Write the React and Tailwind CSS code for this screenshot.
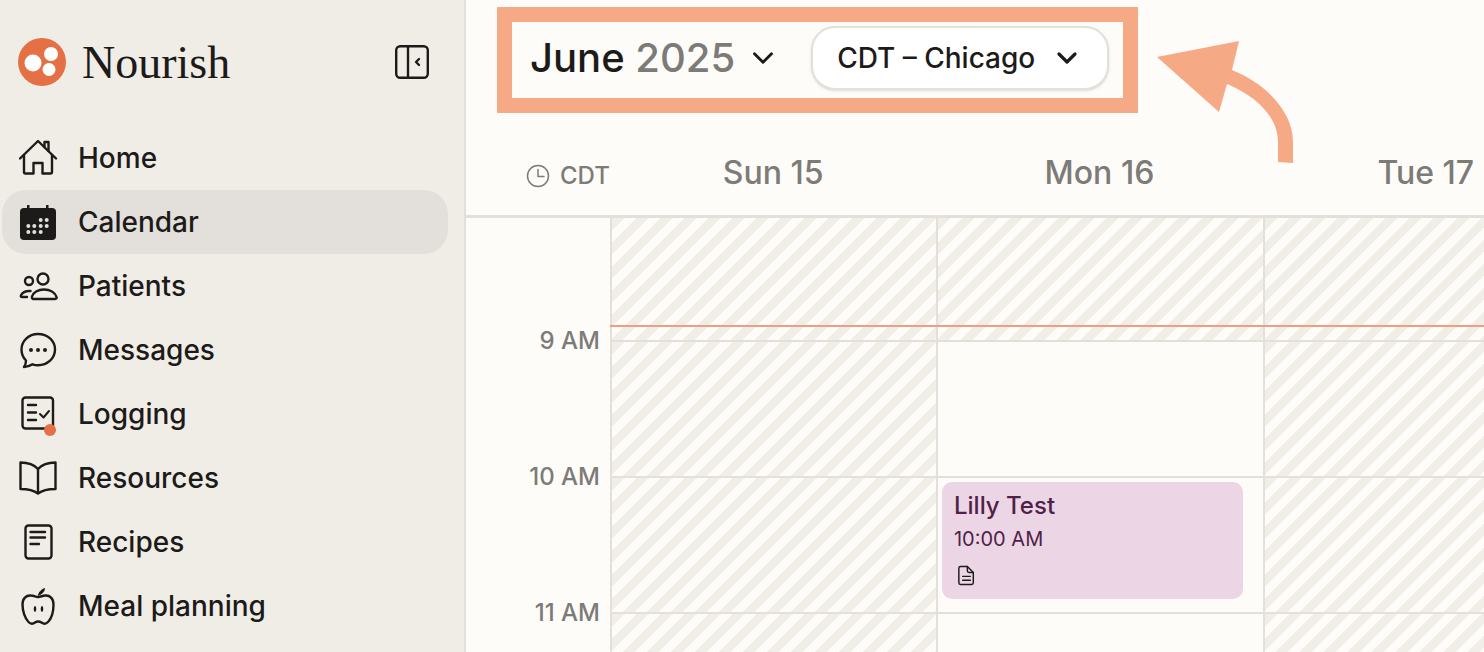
import { ChevronDown } from 'lucide-react';

const stripes = 'bg-[repeating-linear-gradient(135deg,#f1eee8_0,#f1eee8_8.5px,#fefcf9_8.5px,#fefcf9_17px)]';

function Icon({ children, className = '' }) {
  return (
    <svg
      viewBox="0 0 40 40"
      fill="none"
      stroke="#1c1b19"
      strokeWidth="2.4"
      strokeLinecap="round"
      strokeLinejoin="round"
      className={`w-10 h-10 shrink-0 ${className}`}
    >
      {children}
    </svg>
  );
}

const HomeIcon = () => (
  <Icon>
    <path d="M1 20.500 19 3l18 17.500" />
    <path d="M5 17v17a1.500 1.500 0 0 0 1.500 1.500h8V25h9v10.500h8A1.500 1.500 0 0 0 33 34V17" />
    <path d="M25.500 9V4h4v9" />
  </Icon>
);

const CalendarIcon = () => (
  <svg viewBox="0 0 40 40" className="w-10 h-10 shrink-0">
    <rect x="1" y="6" width="36" height="32" rx="4" fill="#1c1b19" />
    <rect x="8" y="3" width="2.500" height="4" fill="#1c1b19" />
    <rect x="27" y="3" width="2.500" height="4" fill="#1c1b19" />
    {[[21.700, 18], [27.700, 18], [9.300, 24], [15.300, 24], [21.700, 24], [27.700, 24], [9.300, 30], [15.300, 30], [21.700, 30]].map(([cx, cy]) => (
      <circle key={`${cx}-${cy}`} cx={cx} cy={cy} r="2" fill="#e3dfdb" />
    ))}
  </svg>
);

const PatientsIcon = () => (
  <Icon>
    <circle cx="10" cy="15" r="4" />
    <circle cx="24" cy="13" r="5.500" />
    <path d="M14.500 33h21.500c1.500 0 2-1 1.500-2C36 26.500 31 23.500 25 23.500S14 26.500 13 30.500C12.600 32 13.300 33 14.500 33Z" />
    <path d="M8 31H3c-1 0-1.500-.7-1-1.700C3.500 26.500 6.500 25 10 25h1.500" />
  </Icon>
);

const MessagesIcon = () => (
  <Icon>
    <path d="M5 37c3 0 6-1 8.500-2.700 1.800.7 3.600 1 5.500 1 9.500 0 17-7 17-15.800S28.500 4 19 4 2.500 11 2.500 19.500c0 4.300 1.500 8 4.500 11 0 2.500-.5 4.500-2 6.500Z" />
    <circle cx="12" cy="20" r="2" fill="#1c1b19" stroke="none" />
    <circle cx="19" cy="20" r="2" fill="#1c1b19" stroke="none" />
    <circle cx="26" cy="20" r="2" fill="#1c1b19" stroke="none" />
  </Icon>
);

const LoggingIcon = () => (
  <div className="relative w-10 h-10 shrink-0">
    <Icon>
      <rect x="3.500" y="3.500" width="30.500" height="31" rx="3" />
      <path d="M9 11h8M9 18.500h8M9 26h8" />
      <path d="m21 20 3.500 3.500L30 17" strokeWidth="2" />
    </Icon>
    <span className="absolute left-[25px] top-[30px] w-3 h-3 rounded-full bg-[#e57045]" />
  </div>
);

const ResourcesIcon = () => (
  <Icon>
    <path d="M19 11C15 6.500 8 4.500 1.500 4.500V31c7 0 13 1 17.500 4.500 4.500-3.500 10.500-4.500 17.500-4.500V4.500C30 4.500 23 6.500 19 11Z" />
    <path d="M19 11v24" />
  </Icon>
);

const RecipesIcon = () => (
  <Icon>
    <rect x="6.500" y="3.500" width="26" height="33" rx="3" />
    <path d="M11.500 10h14.500M11.500 15.500h14.500M11.500 22H20" />
  </Icon>
);

const MealIcon = () => (
  <Icon>
    <path d="M12 9.500C7 9 3.500 12.500 3.500 18.500c0 6.500 2.500 14 6 17.500 2 2 4.500 2 6.500.5 2.300-1.500 4-1.500 6.500 0 2 1.500 4.500 1.500 6.500-.5 3.500-3.500 5.500-11 5.500-17.500 0-6-3.500-9.500-8.500-9-2.500.2-4.500 1.500-7 1.500s-3.500-1.300-7-1.500Z" />
    <path d="M19.500 9c.5-3 2.500-5 6-6.500-.2 3-2 5.300-6 6.500Z" fill="#1c1b19" strokeWidth="1" />
    <ellipse cx="16" cy="23" rx="1.300" ry="3" fill="#1c1b19" stroke="none" />
    <ellipse cx="23" cy="23" rx="1.300" ry="3" fill="#1c1b19" stroke="none" />
  </Icon>
);

const navItems = [
  { label: 'Home', icon: HomeIcon },
  { label: 'Calendar', icon: CalendarIcon, active: true },
  { label: 'Patients', icon: PatientsIcon },
  { label: 'Messages', icon: MessagesIcon },
  { label: 'Logging', icon: LoggingIcon },
  { label: 'Resources', icon: ResourcesIcon },
  { label: 'Recipes', icon: RecipesIcon },
  { label: 'Meal planning', icon: MealIcon },
];

function Sidebar() {
  return (
    <aside className="w-[466px] shrink-0 h-full bg-[#f0ede7] border-r-2 border-[#e3dfdb] overflow-hidden">
      <div className="h-[126px] pl-[18px] pr-[35px] pt-[38px] flex items-start justify-between">
        <div className="flex items-center h-12">
          <svg viewBox="0 0 48 48" className="w-12 h-12 shrink-0">
            <circle cx="24" cy="24" r="24" fill="#e57045" />
            <circle cx="15" cy="25" r="8.500" fill="#fff" />
            <circle cx="33" cy="16" r="7" fill="#fff" />
            <circle cx="31" cy="31.500" r="6.500" fill="#fff" />
          </svg>
          <span className="ml-4 mt-[2px] text-[46px] leading-none text-[#1c1b19] font-['Liberation_Serif',serif]">Nourish</span>
        </div>
        <svg viewBox="0 0 34 34" fill="none" stroke="#1c1b19" strokeWidth="2.400" className="w-[34px] h-[34px] mt-[7px]">
          <rect x="1.200" y="1.200" width="31.600" height="31.600" rx="4" />
          <path d="M13 1v32" />
          <path d="m24 14-3 3 3 3" strokeLinecap="round" strokeLinejoin="round" />
        </svg>
      </div>
      <nav className="flex flex-col pl-[2px] pr-[16px]">
        {navItems.map(({ label, icon: NavIcon, active }) => (
          <div
            key={label}
            className={`h-16 shrink-0 flex items-center pl-[17px] rounded-[24px] ${active ? 'bg-[#e3dfdb]' : ''}`}
          >
            <NavIcon />
            <span className="ml-[19px] text-[28px] leading-none font-medium text-[#1c1b19]">{label}</span>
          </div>
        ))}
      </nav>
    </aside>
  );
}

function Header() {
  return (
    <header className="h-[218px] shrink-0 border-b-[3px] border-[#e3dfdb]">
      <div className="pl-[31px] pt-[7px]">
        <div className="w-[641px] h-[106px] border-[15px] border-[#f5a985] flex items-center pl-[18px] pb-[4px]">
          <h1 className="text-[40px] leading-none font-medium text-[#1c1b19] whitespace-nowrap">
            June <span className="text-[#7c7b77]">2025</span>
          </h1>
          <ChevronDown className="ml-[11px] w-[34px] h-[34px] text-[#1c1b19]" strokeWidth={2} />
          <div className="ml-[31px] w-[298px] h-[64px] rounded-[24px] bg-white border-2 border-[#e3dfdb] shadow-sm flex items-center justify-between pl-6 pr-[24px]">
            <span className="text-[28px] leading-none font-medium text-[#1c1b19] whitespace-nowrap">CDT – Chicago</span>
            <ChevronDown className="w-8 h-8 text-[#1c1b19]" strokeWidth={2.4} />
          </div>
        </div>
      </div>
      <div className="flex items-center h-[102px] pt-[17px]">
        <div className="w-[144px] shrink-0 flex items-center pl-[60px] pt-[7px] text-[#7c7b77]">
          <svg viewBox="0 0 24 24" fill="none" stroke="#7c7b77" strokeWidth="1.500" strokeLinecap="round" strokeLinejoin="round" className="w-6 h-6 shrink-0">
            <circle cx="12" cy="12" r="10.500" />
            <path d="M12 5.500V12.500H18" />
          </svg>
          <span className="ml-[10px] text-[24px] leading-none font-medium">CDT</span>
        </div>
        {['Sun 15', 'Mon 16', 'Tue 17'].map((day) => (
          <div key={day} className="w-[326.300px] shrink-0 text-center text-[32px] leading-none font-[550] text-[#7c7b77] whitespace-nowrap">
            {day}
          </div>
        ))}
      </div>
    </header>
  );
}

// each row's label sits on the line at its bottom edge
const rows = [
  { h: 'h-[124px]', label: '9 AM' },
  { h: 'h-[136px]', label: '10 AM' },
  { h: 'h-[136px]', label: '11 AM' },
  { h: 'h-[136px]', label: null },
];

function Cell({ striped, h, children }) {
  return (
    <div className={`${h} shrink-0 relative border-b-2 border-[#e3dfdb] ${striped ? stripes : ''}`}>{children}</div>
  );
}

function Grid() {
  return (
    <div className="relative flex flex-1 min-h-0 overflow-hidden">
      <div className="w-[144px] shrink-0 flex flex-col">
        {rows.map(({ h, label }) => (
          <div key={h + label} className={`${h} shrink-0 flex items-end justify-end pr-[10px]`}>
            {label && (
              <span className="text-[24px] leading-none font-medium text-[#7c7b77] translate-y-[11px] whitespace-nowrap">{label}</span>
            )}
          </div>
        ))}
      </div>
      {[0, 1, 2].map((col) => (
        <div key={col} className="w-[326.300px] shrink-0 flex flex-col border-l-2 border-[#e3dfdb]">
          {rows.map(({ h }, i) => (
            <Cell key={i} h={h} striped={col !== 1 || i === 0}>
              {col === 1 && i === 2 && (
                <div className="absolute left-[3.700px] top-[4px] w-[301px] h-[117px] rounded-[10px] bg-[#ecd6e6] pl-[12px] pt-[9px] text-[#4f2148]">
                  <div className="text-[24px] leading-[30px] font-[550]">Lilly Test</div>
                  <div className="mt-[6px] text-[20px] leading-[24px]">10:00 AM</div>
                  <svg viewBox="0 0 20 24" fill="none" stroke="#1c1b19" strokeWidth="1.700" strokeLinejoin="round" strokeLinecap="round" className="mt-[14px] ml-[4px] w-[17px] h-[21px]">
                    <path d="M3 1.500h8l7 7v12a2 2 0 0 1-2 2H3a2 2 0 0 1-2-2v-17a2 2 0 0 1 2-2Z" />
                    <path d="M11 1.500v5a2 2 0 0 0 2 2h5" />
                    <path d="M5.500 13h9M5.500 17.500h9" />
                  </svg>
                </div>
              )}
            </Cell>
          ))}
        </div>
      ))}
      {/* current time line */}
      <div className="absolute left-[144px] right-0 top-[107px] h-[2px] bg-[#ee9f7d]" />
    </div>
  );
}

export default function App() {
  return (
    <div className="relative flex w-[1484px] h-[652px] overflow-hidden bg-[#fefcf9] font-['Inter',sans-serif]">
      <Sidebar />
      <main className="flex-1 min-w-0 flex flex-col">
        <Header />
        <Grid />
      </main>
      {/* annotation arrow */}
      <svg viewBox="0 0 344 210" className="absolute left-[1140px] top-[20px] w-[344px] h-[210px]" fill="#f5a985">
        <path d="M17 37 99 21 92 50C125 63 153 91 153 122V143L138 142V122C138 97 116 76 87 64L79 92Z" />
      </svg>
    </div>
  );
}
